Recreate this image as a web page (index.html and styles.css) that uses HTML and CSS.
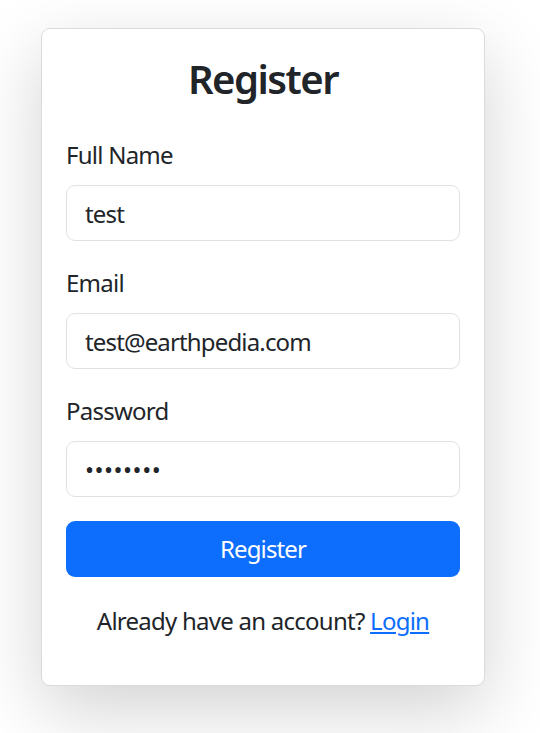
FILE: index.html
```html
<!DOCTYPE html>
<html lang="en">
<head>
<meta charset="utf-8">
<title>Register</title>
<link rel="stylesheet" href="styles.css">
</head>
<body>
<div class="page">
  <div class="card">
    <h3 class="title">Register</h3>
    <form class="form">
      <div class="field">
        <label class="label" for="name">Full Name</label>
        <input class="control" id="name" type="text" value="test">
      </div>
      <div class="field">
        <label class="label" for="email">Email</label>
        <input class="control" id="email" type="email" value="test@earthpedia.com">
      </div>
      <div class="field">
        <label class="label" for="pw">Password</label>
        <input class="control pw" id="pw" type="password" value="password">
      </div>
      <button class="btn" type="button">Register</button>
    </form>
    <p class="foot">Already have an account? <a href="#" class="link">Login</a></p>
  </div>
</div>
</body>
</html>
```
FILE: styles.css
```css
* { box-sizing: border-box; }
html, body { margin: 0; background: #fff; }
body {
  font-family: "Noto Sans", "Open Sans", sans-serif;
  font-size: 24px;
  line-height: 1.5;
  color: #212529;
  letter-spacing: -0.75px;
}
.page {
  padding: 28px 0 80px 41px;
}
.card {
  width: 444px;
  border: 1px solid #d9dcdf;
  border-radius: 9px;
  background: #fff;
  padding: 24px;
  box-shadow: 0 24px 72px rgba(0,0,0,.175);
}
.title {
  margin: 2px 0 34px;
  font-size: 40px;
  font-weight: 600;
  line-height: 1.2;
  text-align: center;
  letter-spacing: -1.5px;
}
.form { display: flex; flex-direction: column; }
.field { margin-bottom: 24px; display: flex; flex-direction: column; }
.label { margin-bottom: 12px; padding-top: 1px; margin-top: -1px; }
.control {
  font: inherit;
  letter-spacing: -0.85px;
  color: #212529;
  height: 56px;
  padding: 0 18px;
  border: 1px solid #dee2e6;
  border-radius: 9px;
  background: #fff;
  outline: none;
}
.control.pw { letter-spacing: 0.5px; }
.btn {
  font: inherit;
  letter-spacing: -0.9px;
  height: 56px;
  border: 0;
  border-radius: 9px;
  background: #0d6efd;
  color: #fff;
  cursor: pointer;
}
.foot {
  margin: 26px 0 22px;
  text-align: center;
}
.link { color: #0d6efd; }
```
